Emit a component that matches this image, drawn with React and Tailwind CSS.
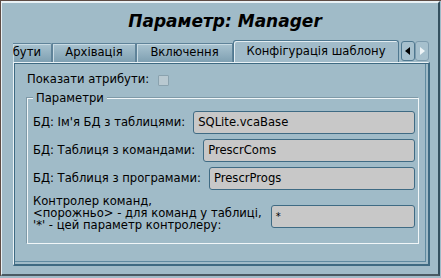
import React from "react";

function Tab({ children, active, className = "" }) {
  if (active) {
    return (
      <div className={"relative z-10 h-[22px] px-[10px] flex items-center bg-[#a1bbc9] border border-b-0 border-[#4f7890] rounded-t-[3px] shadow-[inset_1px_1px_0_#e3edf2] whitespace-nowrap " + className}>
        {children}
      </div>
    );
  }
  return (
    <div className={"h-[19px] flex items-center border border-b-0 border-[#5f8399] bg-gradient-to-b from-[#a9c3d0] to-[#7fa0b2] shadow-[inset_1px_1px_0_#c9dbe4] whitespace-nowrap " + className}>
      {children}
    </div>
  );
}

export default function App() {
  return (
    <div className="w-[441px] h-[278px] bg-[#a0bbc8] overflow-hidden text-black" style={{ fontFamily: '"DejaVu Sans", sans-serif' }}>
      <div className="w-[441px] h-[276px] border-t border-l border-[#5e4c45]">
        <div className="h-[275px] w-[439px] border-t-2 border-l border-[#e9f1f5] border-r-2 border-b-2 border-r-[#34505f] border-b-[#4a5a63] flex flex-col">
          <div className="h-[37px] flex items-center justify-center text-[17px] font-bold italic pt-[1px] pl-[10px]">
            Параметр: Manager
          </div>
          <div className="h-[22px] flex items-end pl-[11px] text-[11.6px]">
            <div className="w-[386px] flex items-end overflow-hidden">
              <Tab className="w-[39px] shrink-0 justify-end pr-[10px] border-l-0 rounded-tr-[2px] overflow-hidden">
                <span className="shrink-0">Атрибути</span>
              </Tab>
              <Tab className="w-[84px] shrink-0 justify-center">Архівація</Tab>
              <Tab className="w-[97px] shrink-0 justify-center">Включення</Tab>
              <Tab active className="w-[166px] shrink-0 justify-center">Конфігурація шаблону</Tab>
            </div>
            <div className="flex items-end ml-[2px] h-[22px] pb-[1px] gap-0">
              <div className="w-[14px] h-[20px] border border-[#4f7890] rounded-[3px] bg-[#a6c0cd] flex items-center justify-center">
                <svg width="6" height="8" viewBox="0 0 6 8"><path d="M5 0 L0 4 L5 8 Z" fill="#000" /></svg>
              </div>
              <div className="w-[14px] h-[20px] border border-[#7d9bad] rounded-[3px] bg-[#a6c0cd] flex items-center justify-center">
                <svg width="6" height="8" viewBox="0 0 6 8"><path d="M1 0 L6 4 L1 8 Z" fill="#eef4f7" /></svg>
              </div>
            </div>
          </div>
          <div className="ml-[11px] w-[417px] h-[204px] border-l border-t border-[#eaf2f6] border-r-2 border-b-2 border-r-[#3e6a82] border-b-[#3e6a82] shadow-[inset_1px_1px_0_#3e6a82,inset_-2px_-2px_0_#a0bbc8,inset_-3px_-3px_0_#5f8aa0] pt-[9px] pl-[13px] text-[11.6px]">
            <div className="h-[16px] flex items-center gap-[9px]">
              <span>Показати атрибути:</span>
              <div className="w-[11px] h-[11px] border border-[#8aa2ae] bg-[#b9c9d1] rounded-[1px]" />
            </div>
            <div className="relative mt-[10px] w-[392px] h-[146px] border border-[#f1f6f8] shadow-[-1px_-1px_0_#7f9aa8] pt-[12px] pl-[5px] pr-[3px]">
              <div className="absolute -top-[8px] left-[5px] px-[3px] bg-[#a0bbc8] leading-[14px]">Параметри</div>
              <div className="flex flex-col gap-[5px]">
                <div className="flex items-center h-[23px] gap-[8px]">
                  <span className="whitespace-nowrap">БД: Ім'я БД з таблицями:</span>
                  <div className="flex-1 h-[23px] bg-[#c8c8c8] border border-[#3f6b84] rounded-[3px] flex items-center pl-[4px]">SQLite.vcaBase</div>
                </div>
                <div className="flex items-center h-[23px] gap-[8px]">
                  <span className="whitespace-nowrap">БД: Таблиця з командами:</span>
                  <div className="flex-1 h-[23px] bg-[#c8c8c8] border border-[#3f6b84] rounded-[3px] flex items-center pl-[4px]">PrescrComs</div>
                </div>
                <div className="flex items-center h-[23px] gap-[8px]">
                  <span className="whitespace-nowrap">БД: Таблиця з програмами:</span>
                  <div className="flex-1 h-[23px] bg-[#c8c8c8] border border-[#3f6b84] rounded-[3px] flex items-center pl-[4px]">PrescrProgs</div>
                </div>
                <div className="flex items-start gap-[9px]">
                  <span className="whitespace-nowrap leading-[12px]">
                    Контролер команд,<br />&lt;порожньо&gt; - для команд у таблиці,<br />'*' - цей параметр контролеру:
                  </span>
                  <div className="flex-1 mt-[10px] h-[23px] bg-[#c8c8c8] border border-[#3f6b84] rounded-[3px] flex items-start pt-[3px] pl-[4px] text-[10px]">*</div>
                </div>
              </div>
            </div>
          </div>
        </div>
      </div>
    </div>
  );
}
